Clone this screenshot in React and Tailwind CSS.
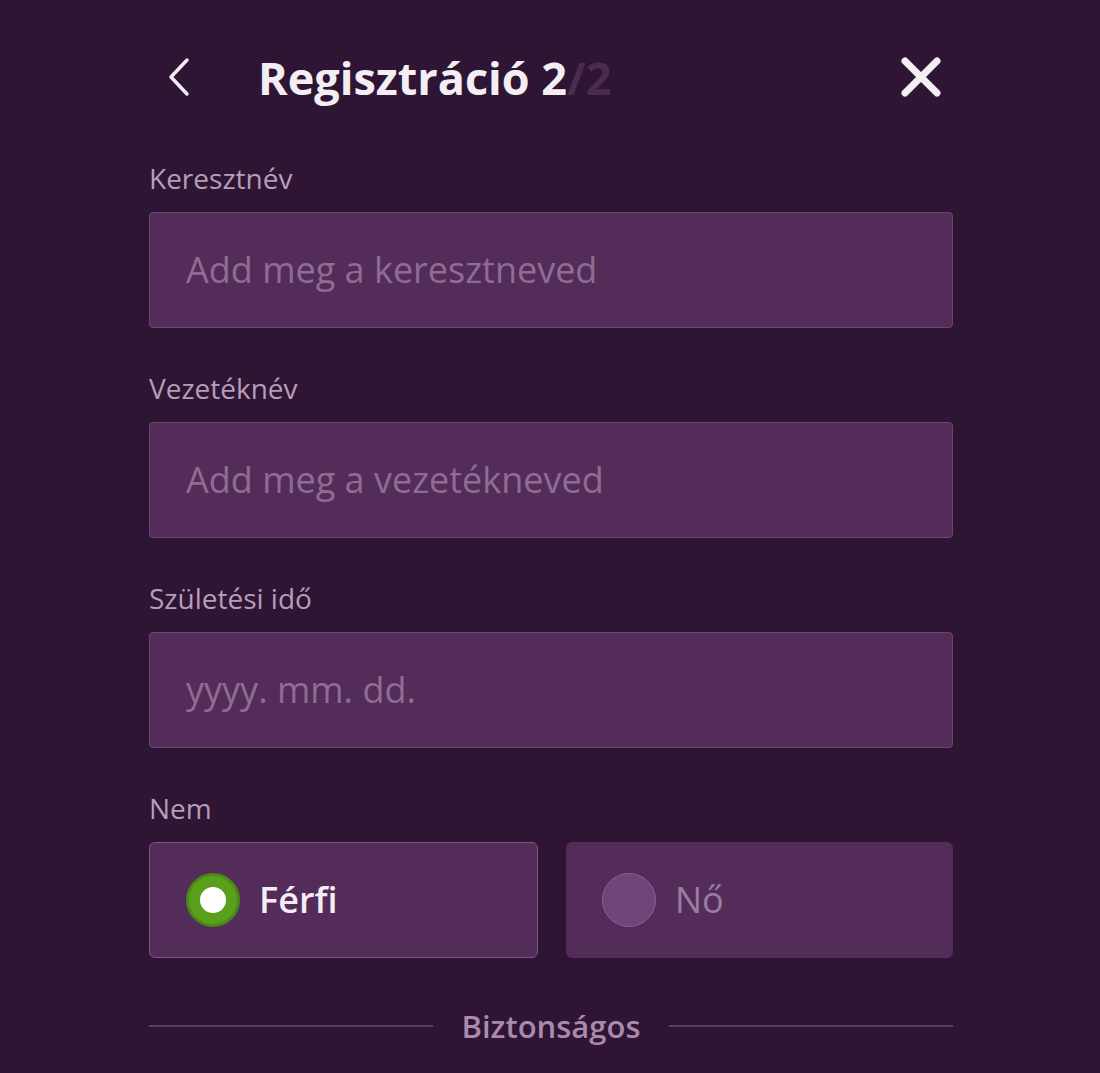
import React from "react";

function Label({ children }) {
  return <label className="text-[28px] leading-[36px] text-[#b69db9] mb-[16px]">{children}</label>;
}

function Field({ label, placeholder }) {
  return (
    <div className="flex flex-col">
      <Label>{label}</Label>
      <div className="h-[116px] rounded-[4px] border border-[#6c4672] bg-[#532c59] flex items-center px-[36px]">
        <span className="text-[36px] text-[#8e6c94]">{placeholder}</span>
      </div>
    </div>
  );
}

export default function App() {
  return (
    <div
      className="min-h-[1073px] w-full bg-[#2e1533] flex justify-center"
      style={{ fontFamily: '"Open Sans", sans-serif' }}
    >
      <div className="w-[804px] ml-[2px] flex flex-col pt-[49px]">
        <div className="flex items-center h-[56px] mb-[55px]">
          <div className="w-[109px] flex items-center pl-[16px]">
            <svg width="28" height="42" viewBox="0 0 28 42" fill="none">
              <path d="M22 4 L6 21 L22 38" stroke="#f3eef3" strokeWidth="3.5" strokeLinecap="round" strokeLinejoin="round" />
            </svg>
          </div>
          <h1 className="flex-1 text-[45px] font-bold text-[#f3eef3] leading-none">
            Regisztráció 2<span className="text-[#4a2c50]">/2</span>
          </h1>
          <div className="pr-[10px]">
            <svg width="44" height="44" viewBox="0 0 44 44" fill="none">
              <path d="M6 6 L38 38 M38 6 L6 38" stroke="#f3eef3" strokeWidth="7" strokeLinecap="round" />
            </svg>
          </div>
        </div>

        <div className="flex flex-col gap-[42px]">
          <Field label="Keresztnév" placeholder="Add meg a keresztneved" />
          <Field label="Vezetéknév" placeholder="Add meg a vezetékneved" />
          <Field label="Születési idő" placeholder="yyyy. mm. dd." />
          <div className="flex flex-col">
            <Label>Nem</Label>
            <div className="flex gap-[28px]">
              <div className="flex-1 h-[116px] rounded-[6px] border border-[#7a5680] bg-[#532c59] flex items-center pl-[36px]">
                <div className="w-[54px] h-[54px] rounded-full bg-[#5aa01c] border-[3px] border-[#4a8a14] flex items-center justify-center">
                  <div className="w-[26px] h-[26px] rounded-full bg-white" />
                </div>
                <span className="ml-[19px] text-[36px] font-semibold text-[#f5ecf5]">Férfi</span>
              </div>
              <div className="flex-1 h-[116px] rounded-[6px] bg-[#532c59] flex items-center pl-[36px]">
                <div className="w-[54px] h-[54px] rounded-full bg-[#70457a] border border-[#8a6490]" />
                <span className="ml-[19px] text-[36px] text-[#9a7da0]">Nő</span>
              </div>
            </div>
          </div>
        </div>

        <div className="flex items-center mt-[47px]">
          <div className="flex-1 h-[2px] bg-[#5d3d63]" />
          <span className="px-[28px] text-[31px] leading-[42px] font-semibold text-[#a98aac]">Biztonságos</span>
          <div className="flex-1 h-[2px] bg-[#5d3d63]" />
        </div>
      </div>
    </div>
  );
}
